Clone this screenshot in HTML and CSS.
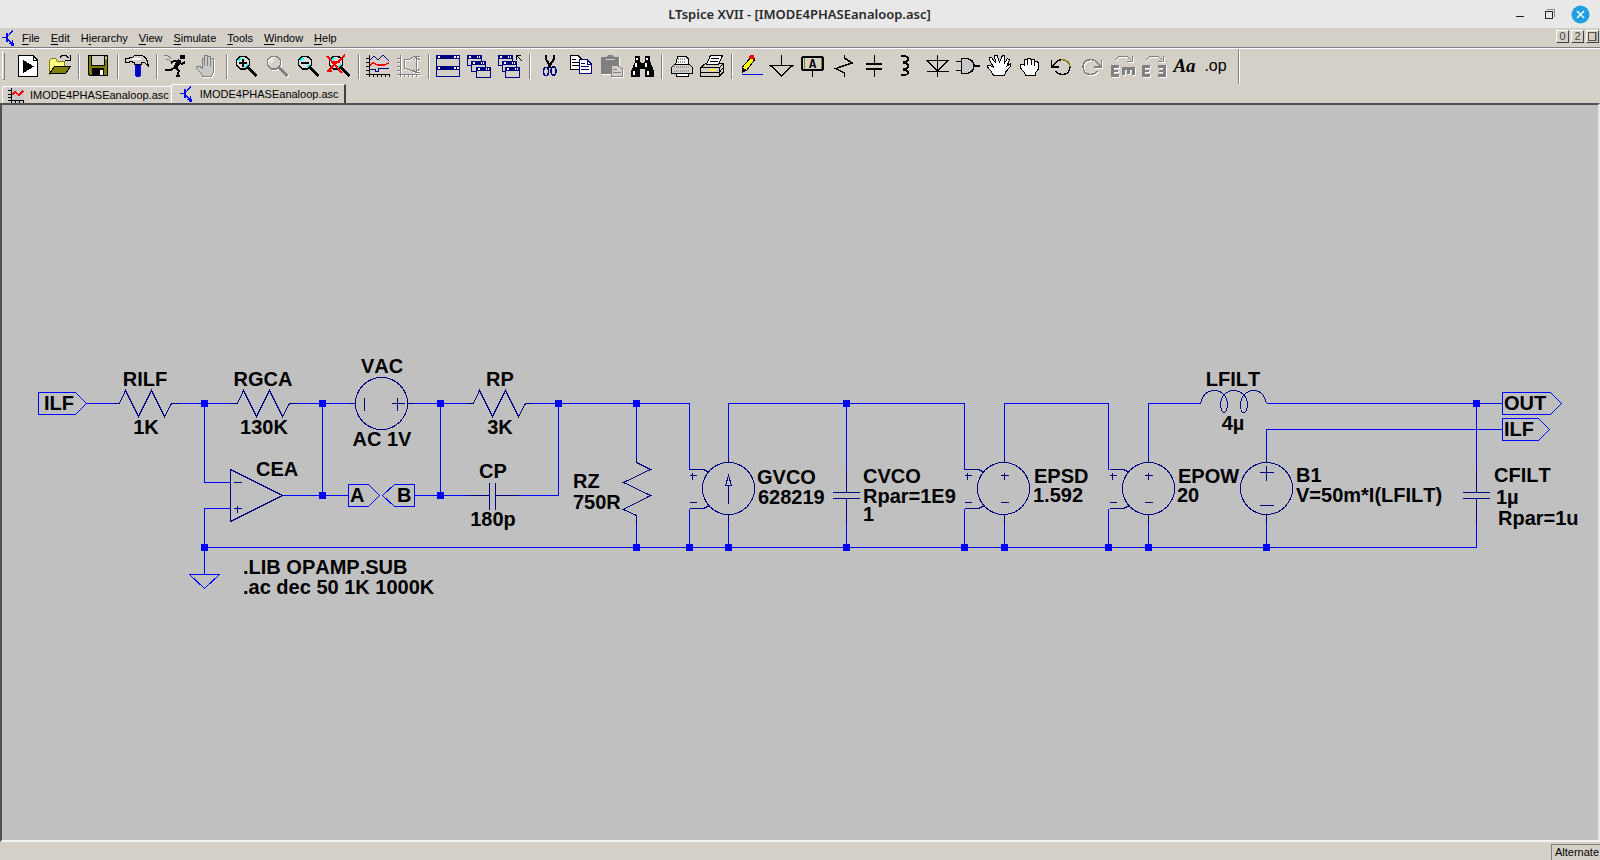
FILE: index.html
```
<!DOCTYPE html>
<html lang="en">
<head>
<meta charset="utf-8">
<title>LTspice XVII - [IMODE4PHASEanaloop.asc]</title>
<link rel="stylesheet" href="styles.css">
</head>
<body>
<svg class="defs" aria-hidden="true">
  <defs>
    <symbol id="transistor" viewBox="0 0 12 16">
      <path d="M0 7.500H4M11 .5L9 2.500L6 6M6 9L9 13" fill="none" stroke="#00f"/>
      <path d="M4 3H6V12H4zM10.500 10V13H12V16H9V14H7V12.500H9z" fill="#00f"/>
    </symbol>
    <symbol id="lens" viewBox="0 0 25 24">
      <path d="M15 13.500L23.500 22" stroke="currentColor" stroke-width="3" fill="none"/>
      <path d="M7.500 2.500H12.500L16.500 6V11L12.500 15H7.500L3.500 11V6z" fill="none" stroke="currentColor" stroke-width="1.500"/>
    </symbol>
    <symbol id="glass" viewBox="0 0 25 24">
      <path d="M7.500 2.500H12.500L16.500 6V11L12.500 15H7.500L3.500 11V6z" fill="#dcdcd8"/>
      <path d="M5 7L8 4M12 14L15 11" stroke="#0ff" stroke-width="2"/>
    </symbol>
    <symbol id="win" viewBox="0 0 15 11">
      <path d="M.5 .5H14.500V10.500H.5z" fill="#d4d0c8" stroke="#000080"/>
      <path d="M0 0H15V4H0z" fill="#000080"/>
      <path d="M2 1H4V3H2zM10 1H11V3H10zM12 1H13V3H12z" fill="#fff"/>
    </symbol>
    <path id="res-h" d="M-33 0H-26L-20 -13L-7 13L6 -13L19 13L26 0H33"/>
    <path id="cap-v" d="M0 -25V-3M-14 -3H13M-14 3H13M0 3V26"/>
    <g id="controlled">
      <circle cx="39" cy="0" r="26"/>
      <path d="M0 -19H14L20 -16M0 20H14L20 17M0 -13H7M3 -16V-9M0 14H7"/>
    </g>
    <rect id="node" x="-3" y="-3" width="7" height="7"/>
  </defs>
</svg>

<div class="app">
  <header class="titlebar">
    <h1 class="title">LTspice XVII - [IMODE4PHASEanaloop.asc]</h1>
    <div class="window-buttons">
      <button class="wbtn" aria-label="Minimize"><svg width="19" height="19"><path d="M5 11.500H13" stroke="#222"/></svg></button>
      <button class="wbtn" aria-label="Restore"><svg width="19" height="19"><path d="M4.500 6.500H11.500V13.500H4.500z" fill="none" stroke="#222"/><path d="M6 4.500H13.500V12" fill="none" stroke="#888"/></svg></button>
      <button class="wbtn" aria-label="Close"><svg width="19" height="19" class="smooth"><circle cx="9.500" cy="9.500" r="9" fill="#1e9fe2"/><path d="M6 6L13 13M13 6L6 13" stroke="#fff" stroke-width="1.500"/></svg></button>
    </div>
  </header>

  <nav class="menubar">
    <svg class="doc-icon" width="12" height="16"><use href="#transistor"/></svg>
    <button class="menu"><u>F</u>ile</button>
    <button class="menu"><u>E</u>dit</button>
    <button class="menu">H<u>i</u>erarchy</button>
    <button class="menu"><u>V</u>iew</button>
    <button class="menu"><u>S</u>imulate</button>
    <button class="menu"><u>T</u>ools</button>
    <button class="menu"><u>W</u>indow</button>
    <button class="menu"><u>H</u>elp</button>
    <div class="mdi">
      <button class="mbtn" aria-label="Minimize document">0</button>
      <button class="mbtn" aria-label="Restore document">2</button>
      <button class="mbtn" aria-label="Close document"><svg width="9" height="9"><path d="M.5 .5H7.500V8.500H.5z" fill="none" stroke="#6b4a3a"/><path d="M8.500 0V9" stroke="#5aa0d0"/></svg></button>
    </div>
  </nav>

  <div class="toolbar" role="toolbar" aria-label="Main">
    <span class="grip"></span>
    <button class="tool" aria-label="Run"><svg width="25" height="24"><path d="M3.500 1.500H18L22.500 6V22.500H3.500z" fill="#fff" stroke="#000"/><path d="M18 1V6H23" fill="none" stroke="#000"/><path d="M8 6L19 12.500L8 19z"/></svg></button>
    <button class="tool" aria-label="Open"><svg width="25" height="24"><path d="M3.500 20V6.500L5.500 4.500H9.500L11.500 7.500H18.500V13H9z" fill="#ffff80" stroke="#808000"/><path d="M3.500 19.500L8.500 12.500H24.500L19.500 19.500z" fill="#808000" stroke="#000"/><path d="M14 3.500L16 1.500H20L22.500 4M24.500 1V6.500M24.500 6.500H19" stroke="#000" fill="none"/></svg></button>
    <span class="sep"></span>
    <button class="tool" aria-label="Save"><svg width="25" height="24"><path d="M3.500 1.500H22.500V21.500H5L3.500 20z" fill="#808000" stroke="#000"/><path d="M6.500 1.500H19.500V11.500H6.500z" fill="#d4d0c8" stroke="#000"/><path d="M7 14H19V22H7z"/><path d="M15 16H18V21H15z" fill="#fff"/><path d="M20 3H22V5H20z" fill="#d4d0c8"/></svg></button>
    <span class="sep"></span>
    <button class="tool" aria-label="Control panel"><svg width="25" height="24"><path d="M11 10H17V22L15 23H12L11 22z" fill="#00f"/><path d="M14 10V22" stroke="#000080" stroke-width="2"/><path d="M1.500 4.500H4.500L6.500 3.500H8.500L10.500 1.500H17.500Q23.500 3 24.500 12L20.500 8.500H17.500V10.500H10.500V8.500L6.500 7.500L4.500 8.500H1.500z" fill="#d4d0c8" stroke="#000"/><path d="M8 5H17" stroke="#fff" stroke-width="2"/></svg></button>
    <span class="sep"></span>
    <button class="tool" aria-label="Simulate"><svg width="25" height="24"><path d="M17 1H22V5H17z"/><path d="M17 6L12 14" stroke="#000" stroke-width="4"/><path d="M17 7L10 7.500L8 9M17 9L19 10L22 8M12 13L8 16L2 16.500M13 14L16 17L14 22H17" fill="none" stroke="#000" stroke-width="2"/><path d="M1 1H4L9 5M3 5H5L8 8" fill="none" stroke="#808080"/></svg></button>
    <button class="tool" aria-label="Halt" disabled><svg width="25" height="24"><path d="M8.500 22.500L7 19L2.500 14.500V12.500H5.500L8.500 14V4.500H10.500V12V1.500H13.500V12V2.500H16.500V12V4.500H19.500V18L17.500 22.500z" fill="#c8c8c4" stroke="#808080"/></svg></button>
    <span class="sep"></span>
    <button class="tool" aria-label="Zoom in"><svg width="25" height="24"><use href="#glass"/><use href="#lens"/><path d="M6 9H14M10 5V13" stroke="#000" stroke-width="2"/></svg></button>
    <button class="tool" aria-label="Zoom area" disabled><svg width="25" height="24" color="#808080"><use href="#lens"/><path d="M6 8L9 5" stroke="#fff"/></svg></button>
    <button class="tool" aria-label="Zoom out"><svg width="25" height="24"><use href="#glass"/><use href="#lens"/><path d="M6 9H14" stroke="#000" stroke-width="2"/></svg></button>
    <button class="tool" aria-label="Zoom full"><svg width="25" height="24"><use href="#glass"/><use href="#lens"/><path d="M1 2L16 19M19 1L2 17M1 17H6M5 8H14" stroke="#f00" stroke-width="2"/></svg></button>
    <span class="sep"></span>
    <button class="tool" aria-label="Autorange"><svg width="25" height="24"><path d="M4 1V23M1 20.500H25" stroke="#000" fill="none"/><path d="M1 4.500H4M1 8.500H4M1 12.500H4M1 16.500H4M8.500 20V23M12.500 20V23M16.500 20V23M20.500 20V23M24.500 20V23" stroke="#000"/><path d="M5 6L9 2L13 6L18 1L24 7M5 15.500H10V17.500H13V14.500H24" stroke="#000080" fill="none"/><path d="M5 11L8 9L13 11L19 11L24 9" stroke="#f00" stroke-width="1.500" fill="none"/></svg></button>
    <button class="tool" aria-label="FFT" disabled><svg width="25" height="24"><path d="M4 1V23M1 20.500H25M1 4.500H4M1 8.500H4M1 12.500H4M1 16.500H4M8.500 20V23M12.500 20V23M16.500 20V23M20.500 20V23M24 2L19 2L14 5L8 6V14L14 16L19 18H24M20.500 3V17M17 6L20 3L24 6M17 15L20 18L24 15" stroke="#808080" fill="none"/></svg></button>
    <span class="sep"></span>
    <button class="tool" aria-label="Tile windows"><svg width="25" height="24"><path d="M1.500 1.500H24.500V22.500H1.500z" fill="none" stroke="#000080"/><path d="M1 1H25V5H1zM1 12H25V16H1z" fill="#000080"/><path d="M3 2H5V4H3zM19 2H21V4H19zM22 2H24V4H22zM3 13H5V15H3zM19 13H21V15H19zM22 13H24V15H22z" fill="#fff"/></svg></button>
    <button class="tool" aria-label="Cascade windows"><svg width="25" height="24"><use href="#win" x="1" y="1" width="15" height="11"/><use href="#win" x="5" y="7" width="15" height="11"/><use href="#win" x="10" y="13" width="15" height="11"/></svg></button>
    <button class="tool" aria-label="Close all"><svg width="25" height="24"><use href="#win" x="1" y="1" width="15" height="11"/><use href="#win" x="5" y="7" width="15" height="11"/><use href="#win" x="8" y="13" width="15" height="11"/><path d="M19 1.500H24M19.500 1V6M20 2L25 7" stroke="#000"/></svg></button>
    <span class="sep"></span>
    <button class="tool" aria-label="Cut"><svg width="25" height="24"><path d="M10 1V5L15 14M18 1V5L12 14" stroke="#000" stroke-width="2" fill="none"/><ellipse cx="10" cy="17.500" rx="2.500" ry="4" fill="none" stroke="#000080" stroke-width="1.500"/><ellipse cx="17.500" cy="17" rx="2.500" ry="4" fill="none" stroke="#000080" stroke-width="1.500"/></svg></button>
    <button class="tool" aria-label="Copy"><svg width="25" height="24"><path d="M3.500 1.500H11L14.500 5V15.500H3.500z" fill="#fff" stroke="#000"/><path d="M5 5.500H9M5 8.500H12M5 11.500H12" stroke="#000"/><path d="M12.500 5.500H20L24.500 10V19.500H12.500z" fill="#fff" stroke="#000080"/><path d="M20 6V10H24M14 9.500H18M14 12.500H22M14 15.500H22" stroke="#000080" fill="none"/></svg></button>
    <button class="tool" aria-label="Paste" disabled><svg width="25" height="24"><path d="M3 3H8L10 1H14L16 3H21V20H3z" fill="#808080"/><path d="M8 5H17" stroke="#d4d0c8"/><path d="M13.500 11.500H20L24.500 15V22.500H13.500z" fill="#d4d0c8" stroke="#808080"/><path d="M15 15.500H19M15 18.500H23" stroke="#808080"/></svg></button>
    <button class="tool" aria-label="Find"><svg width="25" height="24"><path d="M6 2H11V7L12 9H15L16 7V2H21V7L25 17V23H16V15H11V23H2V17L6 8z"/><path d="M7 4H9V6H7zM17 4H19V6H17zM6 9H8V13H6zM16 9H18V13H16zM4 17H6V21H4zM18 17H20V21H18z" fill="#fff"/></svg></button>
    <span class="sep"></span>
    <button class="tool" aria-label="Print"><svg width="25" height="24"><path d="M7.500 11.500L9.500 2.500H18L20.500 5V11.500z" fill="#fff" stroke="#000"/><path d="M3.500 13.500L6.500 10.500H21.500L24.500 13.500V19.500H3.500zM8.500 19.500V22.500H20.500V19.500" fill="#d4d0c8" stroke="#000"/><path d="M10 5H17M10 8H18" stroke="#999" stroke-dasharray="1 1" stroke-width="2"/><path d="M6 13H22M6 17H22" stroke="#999" stroke-dasharray="1 1" stroke-width="2"/><path d="M9 20H20V22H9z" fill="#fff"/></svg></button>
    <button class="tool" aria-label="Print setup"><svg width="25" height="24"><path d="M1.500 13.500L6.500 9.500H24.500L20.500 13.500V22.500H1.500z" fill="#d4d0c8" stroke="#000"/><path d="M7.500 10.500L11.500 1.500H23.500L19.500 10.500z" fill="#fff" stroke="#000"/><path d="M12 4.500H20M11 7.500H19M1 13.500H20M1 18.500H20M20.500 22L24.500 18V10M20.500 18L24 14" stroke="#000" fill="none"/><path d="M11 15H16V17H11z" fill="#ff0"/></svg></button>
    <span class="sep"></span>
    <button class="tool" aria-label="Wire"><svg width="25" height="24"><path d="M13 3L17 5L9 16L4.500 18V13z" fill="#ff0" stroke="#000"/><path d="M4 13V19L9 16z"/><path d="M12 1H16V6L11 4z" fill="#f00"/><path d="M4 20.500H25" stroke="#00f"/></svg></button>
    <button class="tool" aria-label="Ground"><svg width="25" height="24"><path d="M12.500 1V11.500M1.500 11.500H23.500L12.500 22z" fill="none" stroke="#000" stroke-width="1.500"/></svg></button>
    <button class="tool" aria-label="Label net"><svg width="25" height="24"><rect x="2" y="3" width="21" height="13" rx="2" fill="none" stroke="#000" stroke-width="2"/><path d="M4.500 4V15M21.500 4V15" stroke="#808000"/><path d="M12.500 16V23" stroke="#000"/><text x="12.500" y="14" class="pin-label">A</text></svg></button>
    <button class="tool" aria-label="Resistor"><svg width="25" height="24"><path d="M13.500 1V4L21 9L5 14.500L13.500 19V23" fill="none" stroke="#000" stroke-width="1.500"/></svg></button>
    <button class="tool" aria-label="Capacitor"><svg width="25" height="24"><path d="M12.500 1V10M12.500 16V23" stroke="#000" stroke-width="1.500"/><path d="M4 10H20M4 15H20" stroke="#000" stroke-width="2"/></svg></button>
    <button class="tool" aria-label="Inductor"><svg width="25" height="24"><path d="M8 1.500Q15 2 15 5Q15 8 10 8.500Q15 9 15 12Q15 15 10 15.500Q15 16 15 19Q15 21 8 21.500" fill="none" stroke="#000" stroke-width="2"/></svg></button>
    <button class="tool" aria-label="Diode"><svg width="25" height="24"><path d="M13.500 1V23M3 6.500H24L13.500 17zM3 17.500H25" fill="none" stroke="#000" stroke-width="1.500"/></svg></button>
    <button class="tool" aria-label="Component"><svg width="25" height="24"><path d="M6.500 4.500H12Q19 6 19 12Q19 18 12 19.500H6.500z" fill="#c8c8c8" stroke="#000" stroke-width="1.500"/><path d="M1 7.500H6M1 16.500H6M19 12H25" stroke="#000" stroke-width="1.500"/></svg></button>
    <button class="tool" aria-label="Move"><svg width="25" height="24"><path d="M7.500 21.500L5 17L1.500 13V11.500H4L7.500 13L3.500 6V3.500H5.500L9.500 9L8.500 1.500H11L13.500 8L16.500 1.500H18.500V9L21.500 4.500L23.500 6L21 12L24.500 9.500V12.500L19.500 18L18.500 21.500z" fill="#fff" stroke="#000"/></svg></button>
    <button class="tool" aria-label="Drag"><svg width="25" height="24"><path d="M8.500 21.500L7 18L3.500 14V10.500L7 11V5.500H10L11 4.500H13L14 5.500H17L18 7.500H20L21.500 9V15L18.500 19V21.500z" fill="#fff" stroke="#000"/><path d="M10.500 6V11M14 6V11M17.500 7V12" stroke="#000"/></svg></button>
    <button class="tool" aria-label="Undo"><svg width="25" height="24"><path d="M5 12Q9 5.500 14 5.500" fill="none" stroke="#000" stroke-width="1.500"/><path d="M13 5.500Q22 6 22 13" fill="none" stroke="#808000" stroke-width="1.500"/><path d="M22 13Q21 20.500 15 20.500Q10 20.500 8 17M3.500 6V13H11" fill="none" stroke="#000" stroke-width="1.500"/></svg></button>
    <button class="tool" aria-label="Redo" disabled><svg width="25" height="24"><path d="M21 12Q17 5.500 12 5.500Q4 6 4 13Q5 20.500 11 20.500Q16 20.500 18 17M22.500 6V13H15" fill="none" stroke="#808080" stroke-width="1.500"/></svg></button>
    <button class="tool" aria-label="Rotate" disabled><svg width="25" height="24"><path d="M1 11H9V14H4V16H8V18H4V20H9V23H1zM12 13H25V21H22V16H20V20H17V16H15V21H12z" fill="#808080"/><path d="M5 6L9 2H17L21 6M22 2V7H17" stroke="#808080" fill="none"/></svg></button>
    <button class="tool" aria-label="Mirror" disabled><svg width="25" height="24"><path d="M1 11H9V14H4V16H8V18H4V20H9V23H1zM25 11H17V14H22V16H18V18H22V20H17V23H25z" fill="#808080"/><path d="M5 6L9 2H17L21 6M22 2V7H17" stroke="#808080" fill="none"/></svg></button>
    <button class="tool tool-text" aria-label="Comment text">Aa</button>
    <button class="tool tool-op" aria-label="SPICE directive">.op</button>
    <span class="bar-end"></span>
  </div>

  <div class="tabs" role="tablist">
    <button class="tab" role="tab" aria-selected="false">
      <svg width="16" height="15"><path d="M0 0H16V15H0z" fill="#c8c8c8"/><path d="M3.500 0V15M0 12.500H16M0 2.500H3M0 6.500H3M0 9.500H3M7.500 12V15M11.500 12V15M15.500 12V15" stroke="#000"/><path d="M4 7L7 4L11 7L15 3" stroke="#f00" stroke-width="1.500" fill="none"/></svg>
      IMODE4PHASEanaloop.asc</button>
    <button class="tab active" role="tab" aria-selected="true">
      <svg width="12" height="16"><use href="#transistor"/></svg>
      IMODE4PHASEanaloop.asc</button>
  </div>

  <main class="sheet">
    <svg class="schematic" role="img" aria-label="Schematic">
      <g transform="translate(-2 -105)">
        <g class="wires" transform="translate(.5 .5)">
          <path d="M86 403H112M178 403H230M296 403H349M413 403H466M532 403H689V469M204 403V482H230M230 508H204V574M282 495H348M322 403V495M414 495H466M440 403V495M518 495H558V403"/>
          <path d="M204 547H1476V521M636 403V457M636 521V547M689 508V547M728 457V403H964V469M728 521V547M846 403V470M846 521V547M964 508V547M1004 457V403H1108V469M1004 521V547M1108 508V547M1148 457V403H1200M1148 521V547M1266 403H1502M1266 457V429H1502M1266 521V547M1476 403V470"/>
          <path d="M189 574H219L204 588z"/>
          <path d="M38 392H75L86 403L75 414H38zM348 484H368L379 495L368 506H348zM414 484H394L382 495L394 506H414zM1502 392H1550L1561 403L1550 414H1502zM1502 418H1538L1549 429L1538 440H1502z"/>
        </g>
        <g class="parts" transform="translate(.5 .5)">
          <use href="#res-h" x="145" y="403"/>
          <use href="#res-h" x="263" y="403"/>
          <use href="#res-h" x="499" y="403"/>
          <path d="M636 457V462L650 469L623 482L650 495L623 509L636 515V521"/>
          <circle cx="381" cy="403" r="26"/>
          <path d="M349 403H355M407 403H413M364 397V410M391 403H404M397 397V410"/>
          <path d="M230 469L282 495L230 521zM233 482H241M233 508H241M237 505V512"/>
          <path d="M466 495H489M489 482V509M495 482V509M495 495H518"/>
          <use href="#controlled" x="689" y="488"/>
          <use href="#controlled" x="964" y="488"/>
          <use href="#controlled" x="1109" y="488"/>
          <path d="M728 457V462M728 514V521M1004 457V462M1004 514V521M1148 457V462M1148 514V521"/>
          <path d="M728 503V485M728 475L725 485H731z"/>
          <path d="M1000 475H1008M1004 472V479M1000 502H1008M1144 475H1152M1148 472V479M1144 502H1152"/>
          <use href="#cap-v" x="846" y="495"/>
          <use href="#cap-v" x="1476" y="495"/>
          <circle cx="1266" cy="488" r="26"/>
          <path d="M1266 457V462M1266 514V521M1259 472H1273M1266 465V480M1259 505H1273"/>
          <path d="M1200 403Q1203 390 1214 390C1222 390 1227 397 1227 404C1227 409 1225 412 1223 412C1222 412 1220 409 1220 404C1220 396 1226 390 1233 390C1241 390 1247 396 1247 404C1247 409 1245 412 1243 412C1241 412 1240 409 1240 404C1240 396 1246 390 1253 390Q1263 390 1266 403"/>
        </g>
        <g class="nodes">
          <use href="#node" x="204" y="403"/><use href="#node" x="322" y="403"/><use href="#node" x="440" y="403"/><use href="#node" x="558" y="403"/><use href="#node" x="636" y="403"/><use href="#node" x="846" y="403"/><use href="#node" x="1476" y="403"/>
          <use href="#node" x="322" y="495"/><use href="#node" x="440" y="495"/>
          <use href="#node" x="204" y="547"/><use href="#node" x="636" y="547"/><use href="#node" x="689" y="547"/><use href="#node" x="728" y="547"/><use href="#node" x="846" y="547"/><use href="#node" x="964" y="547"/><use href="#node" x="1004" y="547"/><use href="#node" x="1108" y="547"/><use href="#node" x="1148" y="547"/><use href="#node" x="1266" y="547"/>
        </g>
        <g class="labels">
          <text x="44" y="410">ILF</text>
          <text x="350" y="502">A</text>
          <text x="397" y="502">B</text>
          <text x="1504" y="410">OUT</text>
          <text x="1504" y="436">ILF</text>
          <text x="256" y="476">CEA</text>
          <text x="243" y="574">.LIB OPAMP.SUB</text>
          <text x="243" y="594">.ac dec 50 1K 1000K</text>
          <text x="573" y="488">RZ</text>
          <text x="573" y="509">750R</text>
          <text x="757" y="484">GVCO</text>
          <text x="758" y="504">628219</text>
          <text x="863" y="483">CVCO</text>
          <text x="863" y="503">Rpar=1E9</text>
          <text x="863" y="521">1</text>
          <text x="1034" y="483">EPSD</text>
          <text x="1033" y="502">1.592</text>
          <text x="1178" y="483">EPOW</text>
          <text x="1177" y="502">20</text>
          <text x="1296" y="482">B1</text>
          <text x="1296" y="502">V=50m*I(LFILT)</text>
          <text x="1494" y="482">CFILT</text>
          <text x="1496" y="504">1µ</text>
          <text x="1498" y="525">Rpar=1u</text>
          <g class="mid">
            <text x="145" y="386">RILF</text>
            <text x="146" y="434">1K</text>
            <text x="263" y="386">RGCA</text>
            <text x="264" y="434">130K</text>
            <text x="382" y="373">VAC</text>
            <text x="382" y="446">AC 1V</text>
            <text x="500" y="386">RP</text>
            <text x="500" y="434">3K</text>
            <text x="493" y="478">CP</text>
            <text x="493" y="526">180p</text>
            <text x="1233" y="386">LFILT</text>
            <text x="1233" y="430">4µ</text>
          </g>
        </g>
      </g>
    </svg>
  </main>

  <footer class="statusbar"><span class="pane">Alternate</span></footer>
</div>
</body>
</html>
```
FILE: styles.css
```
* { box-sizing: border-box; }
html, body { height: 100%; margin: 0; }
body {
  font: 11px/13px "Liberation Sans", Arial, sans-serif;
  color: #000;
  background: #d4d0c8;
}
button { font: inherit; color: inherit; background: none; border: 0; padding: 0; margin: 0; }
svg { display: block; flex: none; shape-rendering: crispEdges; }
.smooth { shape-rendering: auto; }
.defs { position: absolute; width: 0; height: 0; }

.app { height: 100vh; display: flex; flex-direction: column; overflow: hidden; }

.titlebar {
  display: grid;
  grid-template-columns: 1fr auto 1fr;
  align-items: center;
  height: 28px;
  flex: none;
  background: #e8e8e8;
  padding-right: 10px;
  padding-left: 9px;
}
.title {
  grid-column: 2;
  margin: 0;
  font: 600 13px/18px "Noto Sans", sans-serif;
  color: #2a2a2a;
}
.window-buttons { display: flex; gap: 11px; justify-content: flex-end; }
.wbtn { display: block; }

.menubar {
  display: flex;
  align-items: center;
  height: 21px;
  flex: none;
  padding-left: 2px;
  border-bottom: 1px solid #fff;
  box-shadow: inset 0 -1px #808080;
}
.doc-icon { margin-right: 3px; }
.menu { padding: 0 6px 0 5px; }
.menu u { text-underline-offset: 2px; text-decoration-skip-ink: none; }
.mdi { display: flex; gap: 2px; margin-left: auto; margin-right: 1px; align-self: flex-start; padding-top: 2px; }
.mbtn {
  display: flex;
  align-items: center;
  justify-content: center;
  width: 13px;
  height: 13px;
  border: 1px solid;
  border-color: #fff #404040 #404040 #fff;
  line-height: 11px;
  color: #444;
}

.toolbar { display: flex; align-items: stretch; height: 35px; flex: none; }
.grip { width: 3px; margin: 3px 7px 4px 2px; border: 1px solid; border-color: #fff #808080 #808080 #fff; }
.sep { width: 2px; margin: 5px 2px 5px 4px; border-left: 1px solid #808080; border-right: 1px solid #fff; }
.tool { width: 31px; display: flex; align-items: center; justify-content: center; flex: none; padding-bottom: 2px; }
.tool:disabled svg { filter: drop-shadow(1px 1px 0 #fff); }
.tool-text { font: italic 700 19px/24px "Liberation Serif", serif; }
.tool-op { font: 16px/24px "Liberation Sans", Arial, sans-serif; }
.pin-label { font: 700 12px "Liberation Mono", monospace; text-anchor: middle; }
.bar-end { width: 2px; margin-left: 7px; border-left: 1px solid #808080; border-right: 1px solid #fff; }

.tabs { display: flex; align-items: flex-end; height: 19px; flex: none; padding-left: 2px; }
.tab {
  display: flex;
  align-items: center;
  gap: 6px;
  height: 17px;
  padding: 0 2px 0 5px;
  border-left: 1px solid #fff;
  border-top: 1px solid #fff;
  border-top-left-radius: 2px;
  white-space: nowrap;
}
.tab.active {
  gap: 8px;
  height: 19px;
  padding: 0 5px 0 8px;
  border-right: 2px solid #404040;
}

.sheet {
  flex: 1;
  min-height: 0;
  background: #c0c0c0;
  border: 2px solid;
  border-color: #505050 #e8e6e0 #f4f2ee #505050;
}
.schematic { width: 100%; height: 100%; }
.wires { fill: none; stroke: #00f; }
.parts { fill: none; stroke: #000080; }
.nodes { fill: #00f; }
.labels { font: 700 20px "Liberation Sans", Arial, sans-serif; font-kerning: none; }
.mid { text-anchor: middle; }

.statusbar { display: flex; justify-content: flex-end; height: 18px; flex: none; padding-top: 2px; }
.pane { padding: 1px 1px 0 3px; border-top: 1px solid #808080; border-left: 1px solid #808080; }
```
